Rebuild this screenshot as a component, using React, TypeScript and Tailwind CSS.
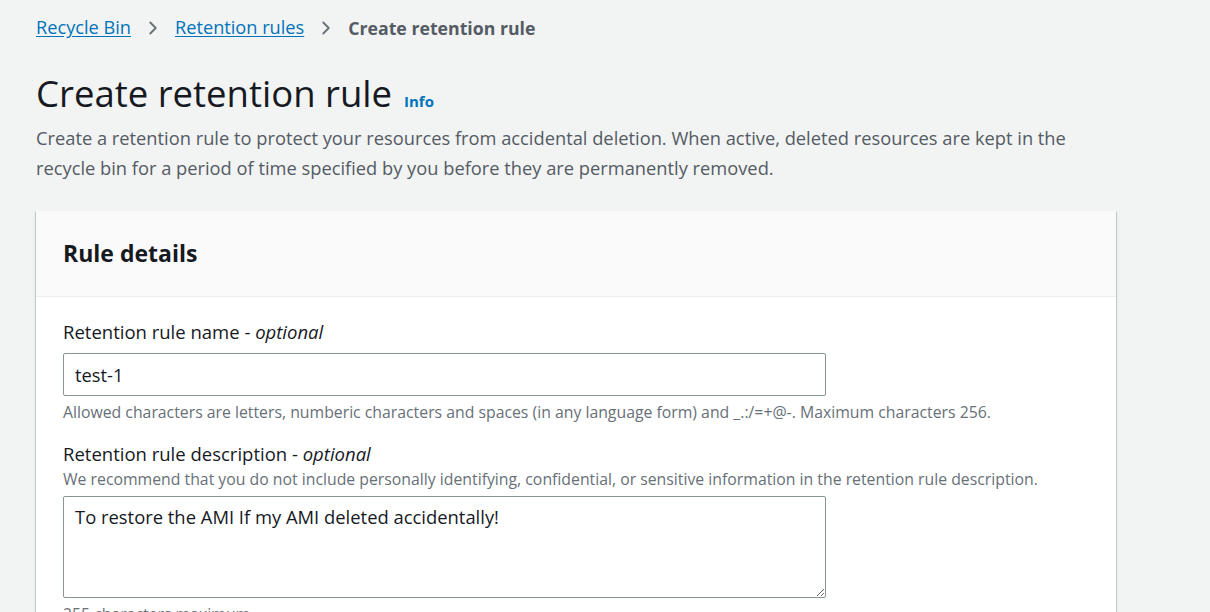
import { ChevronRight } from "lucide-react";

const font = { fontFamily: '"Open Sans", "Noto Sans", Arial, sans-serif' };

export default function App() {
  return (
    <div className="min-h-screen bg-[#f2f3f3] text-[#16191f]" style={font}>
      <div className="px-[36px] pt-[15px]">
        {/* Breadcrumbs */}
        <nav className="flex items-center h-[26px] text-[18.2px]">
          <a href="#" className="text-[#0073bb] underline underline-offset-2">Recycle Bin</a>
          <ChevronRight className="w-[22px] h-[22px] mx-[11px] text-[#687078]" strokeWidth={2} />
          <a href="#" className="text-[#0073bb] underline underline-offset-2">Retention rules</a>
          <ChevronRight className="w-[22px] h-[22px] mx-[11px] text-[#687078]" strokeWidth={2} />
          <span className="font-bold text-[#545b64] text-[17.7px]">Create retention rule</span>
        </nav>

        {/* Header */}
        <div className="mt-[27px] flex items-baseline gap-[12px]">
          <h1 className="text-[36.5px] leading-[50px] font-normal">Create retention rule</h1>
          <a href="#" className="text-[15px] font-bold text-[#0073bb]">Info</a>
        </div>
        <p className="mt-[5px] text-[18.3px] leading-[30px] text-[#545b64] max-w-[1050px]">
          Create a retention rule to protect your resources from accidental deletion. When active, deleted resources are kept in the recycle bin for a period of time specified by you before they are permanently removed.
        </p>

        {/* Card */}
        <div className="mt-[28px] w-[1080px] bg-white shadow-[0_1px_1px_0_rgba(0,28,36,0.3),1px_1px_1px_0_rgba(0,28,36,0.15),-1px_1px_1px_0_rgba(0,28,36,0.15)]">
          <div className="h-[86px] bg-[#fafafa] border-b border-[#eaeded] flex items-center px-[27px]">
            <h2 className="text-[23px] font-bold">Rule details</h2>
          </div>
          <div className="px-[27px] pt-[20px] pb-[20px]">
            <label className="block text-[18.5px] leading-[30px]">
              Retention rule name - <i>optional</i>
            </label>
            <input
              defaultValue="test-1"
              className="mt-[6px] block w-[763px] h-[43px] border border-[#879596] rounded-[2px] px-[11px] text-[18.3px] text-[#16191f] outline-none"
              style={font}
            />
            <p className="mt-[6px] text-[15.8px] leading-[20px] text-[#687078]">
              Allowed characters are letters, numberic characters and spaces (in any language form) and _.:/=+@-. Maximum characters 256.
            </p>

            <label className="mt-[17px] block text-[18.5px] leading-[30px]">
              Retention rule description - <i>optional</i>
            </label>
            <p className="text-[15.8px] leading-[20px] text-[#687078]">
              We recommend that you do not include personally identifying, confidential, or sensitive information in the retention rule description.
            </p>
            <textarea
              defaultValue="To restore the AMI If my AMI deleted accidentally!"
              className="mt-[7px] block w-[763px] h-[102px] border border-[#879596] rounded-[2px] px-[11px] py-[6px] text-[18.4px] leading-[28px] text-[#16191f] outline-none resize"
              style={font}
            />
            <p className="mt-[6px] text-[15.8px] leading-[20px] text-[#687078]">255 characters maximum.</p>
          </div>
        </div>
      </div>
    </div>
  );
}
